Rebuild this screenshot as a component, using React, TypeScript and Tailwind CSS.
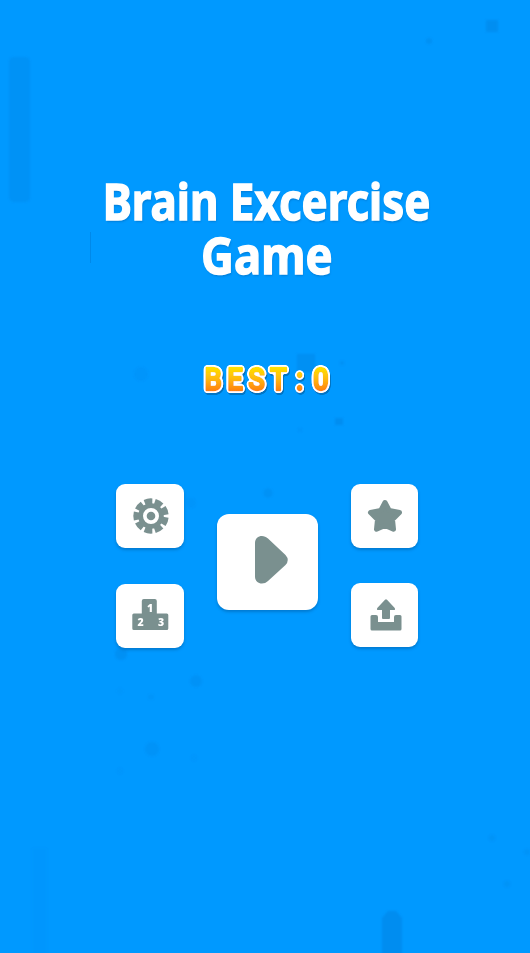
import type { ReactNode } from 'react';

const GREY = '#7a908f';

function Tile({ label, className, children }: { label: string; className: string; children: ReactNode }) {
  return (
    <button
      aria-label={label}
      className={`flex shrink-0 items-center justify-center bg-white shadow-[0_2px_3px_rgba(0,65,120,0.35)] ${className}`}
    >
      {children}
    </button>
  );
}

function Gear() {
  return (
    <svg width="38" height="38" viewBox="-19 -19 38 38" fill={GREY} className="block">
      <g transform="rotate(-10)">
        {[0, 40, 80, 120, 160, 200, 240, 280, 320].map((a) => (
          <path key={a} transform={`rotate(${a})`} d="M-3-10L-4.400-17.100Q0-18.300 4.400-17.100L3-10Z" />
        ))}
      </g>
      <circle r="10.400" fill="none" stroke={GREY} strokeWidth="4.800" />
      <circle r="4.300" />
    </svg>
  );
}

function Podium() {
  return (
    <svg width="38" height="32" viewBox="-.3 0 38 32" className="block">
      <path
        fill={GREY}
        d="M12.500 0h11q2 0 2 2v12.500H35.500q1.500 0 1.500 1.500v13.500q0 1.500-1.500 1.500h-33q-1.500 0-1.500-1.500V16q0-1.500 1.500-1.500h8V2q0-2 2-2Z"
      />
      <g fill="white" fontFamily="'Open Sans', sans-serif" fontWeight="800" fontSize="10.500" textAnchor="middle">
        <text x="18.700" y="13">1</text>
        <text x="9.200" y="26.500">2</text>
        <text x="29.800" y="26.500">3</text>
      </g>
    </svg>
  );
}

function Backdrop() {
  return (
    <svg className="absolute inset-0" width="530" height="953" viewBox="0 0 530 953" fill="#0070c8">
      <defs>
        <filter id="soft" x="-20%" y="-20%" width="140%" height="140%">
          <feGaussianBlur stdDeviation="0.8" />
        </filter>
      </defs>
      <g filter="url(#soft)">
        <rect x="9" y="57" width="21" height="145" rx="5" opacity=".17" />
        <path d="M382 960V918L388 911h8l6 7v42Z" opacity=".28" />
        <rect x="32" y="848" width="15" height="112" opacity=".035" />
        <rect x="486" y="20" width="12" height="12" opacity=".26" />
        <circle cx="429" cy="41" r="3" opacity=".2" />
        <rect x="297" y="354" width="18" height="18" opacity=".22" />
        <rect x="335" y="418" width="8" height="7" opacity=".25" />
        <circle cx="342" cy="363" r="2" opacity=".2" />
        <circle cx="300" cy="430" r="2" opacity=".1" />
        <circle cx="141" cy="374" r="7" opacity=".08" />
        <circle cx="268" cy="493" r="4.500" opacity=".17" />
        <circle cx="191" cy="503" r="5" opacity=".08" />
        <circle cx="121" cy="654" r="6" opacity=".2" />
        <circle cx="196" cy="681" r="6" opacity=".15" />
        <circle cx="151" cy="697" r="3" opacity=".09" />
        <circle cx="120" cy="691" r="3" opacity=".05" />
        <circle cx="152" cy="749" r="7" opacity=".13" />
        <circle cx="194" cy="758" r="3" opacity=".06" />
        <circle cx="120" cy="771" r="3" opacity=".06" />
        <circle cx="492" cy="838" r="3" opacity=".14" />
        <circle cx="527" cy="852" r="3" opacity=".12" />
        <circle cx="507" cy="884" r="3" opacity=".14" />
      </g>
      <rect x="90" y="232" width="1" height="31" opacity=".4" />
    </svg>
  );
}

function Score() {
  return (
    <svg width="136" height="40" viewBox="0 0 136 40" className="block">
      <defs>
        <linearGradient id="gold" gradientUnits="userSpaceOnUse" x1="0" y1="7" x2="0" y2="33">
          <stop offset="0" stopColor="#ffe600" />
          <stop offset=".5" stopColor="#ffb90c" />
          <stop offset="1" stopColor="#ff7a12" />
        </linearGradient>
        <filter id="rim" x="-10%" y="-25%" width="120%" height="150%">
          <feGaussianBlur in="SourceAlpha" stdDeviation="1.500" result="halo" />
          <feComponentTransfer in="halo" result="round">
            <feFuncA type="linear" slope="12" intercept="-.8" />
          </feComponentTransfer>
          <feFlood floodColor="white" />
          <feComposite in2="round" operator="in" result="white" />
          <feOffset in="round" dx="1" dy="1.500" result="off" />
          <feFlood floodColor="#086bb5" floodOpacity=".8" />
          <feComposite in2="off" operator="in" result="shade" />
          <feMerge>
            <feMergeNode in="shade" />
            <feMergeNode in="white" />
            <feMergeNode in="SourceGraphic" />
          </feMerge>
        </filter>
      </defs>
      <g filter="url(#rim)">
        <text
          transform="scale(.86 1)"
          x="15.200 40.800 65.700 91.300 115.900 140.600"
          y="31.300"
          textAnchor="middle"
          fontFamily="Roboto, sans-serif"
          fontWeight="500"
          fontSize="32"
          fill="url(#gold)"
          stroke="url(#gold)"
          strokeWidth="2.400"
          strokeLinejoin="round"
        >
          BEST:0
        </text>
      </g>
    </svg>
  );
}

export default function App() {
  return (
    <main className="relative h-[953px] w-[530px] overflow-hidden bg-[#0099ff]">
      <Backdrop />
      <div className="relative flex flex-col items-center pt-[173px]">
        <h1 className="flex h-[110px] w-full flex-col items-center pl-[3px] font-['Noto_Sans'] text-[51px] leading-[54px] font-bold whitespace-nowrap text-white [-webkit-text-stroke:1.4px_white] [text-shadow:1px_2px_2px_rgba(0,70,135,0.3)]">
          <span className="origin-center scale-x-[0.86]">Brain Excercise</span>
          <span className="origin-center scale-x-[0.89]">Game</span>
        </h1>
        <div className="mt-[76px] pl-[6px]">
          <Score />
        </div>
        <div className="mt-[85px] flex w-full items-start pl-[116px]">
          <div className="flex flex-col gap-9">
            <Tile label="Settings" className="h-16 w-[68px] rounded-[9px] pl-px"><Gear /></Tile>
            <Tile label="Leaderboard" className="h-16 w-[68px] rounded-[9px] pb-0.5"><Podium /></Tile>
          </div>
          <Tile label="Play" className="mt-[30px] ml-[33px] h-24 w-[101px] rounded-xl pb-1 pl-2">
            <svg width="34" height="50" viewBox="0 0 34 50" className="block" fill={GREY}>
              <path d="M0 8C0 .5 8.500-1 13 3.500L30.500 20Q35 25 30.500 30L13 46C8.500 50.500 0 49 0 41.500Z" />
            </svg>
          </Tile>
          <div className="ml-[33px] flex flex-col gap-[35px]">
            <Tile label="Rate" className="h-16 w-[67px] rounded-[9px]">
              <svg width="36" height="34" viewBox="0 0 36 34" className="block">
                <path
                  fill={GREY}
                  stroke={GREY}
                  strokeWidth="5"
                  strokeLinejoin="round"
                  d="M18 3.500L22.200 11.500L32.500 13.500L25.500 20.500L26.500 30.200L18 26.500L9.500 30.200L10.500 20.500L3.500 13.500L13.800 11.500Z"
                />
              </svg>
            </Tile>
            <Tile label="Share" className="h-16 w-[67px] rounded-[9px] pl-0.5">
              <svg width="32" height="32" viewBox="0 0 32 32" className="block" fill={GREY}>
                <path d="M15 .8q1-1 2 0l7.500 8q1.500 2.200-1 2.200H20v8q0 1-1 1h-6q-1 0-1-1v-8H8.500q-2.500 0-1-2.200Z" />
                <path d="M2 16h4q2 0 2 2v5h16v-5q0-2 2-2h4q1.500 0 1.500 1.500v12.500q0 1.500-1.500 1.500H2q-1.500 0-1.500-1.500v-12.500Q.5 16 2 16Z" />
              </svg>
            </Tile>
          </div>
        </div>
      </div>
    </main>
  );
}
